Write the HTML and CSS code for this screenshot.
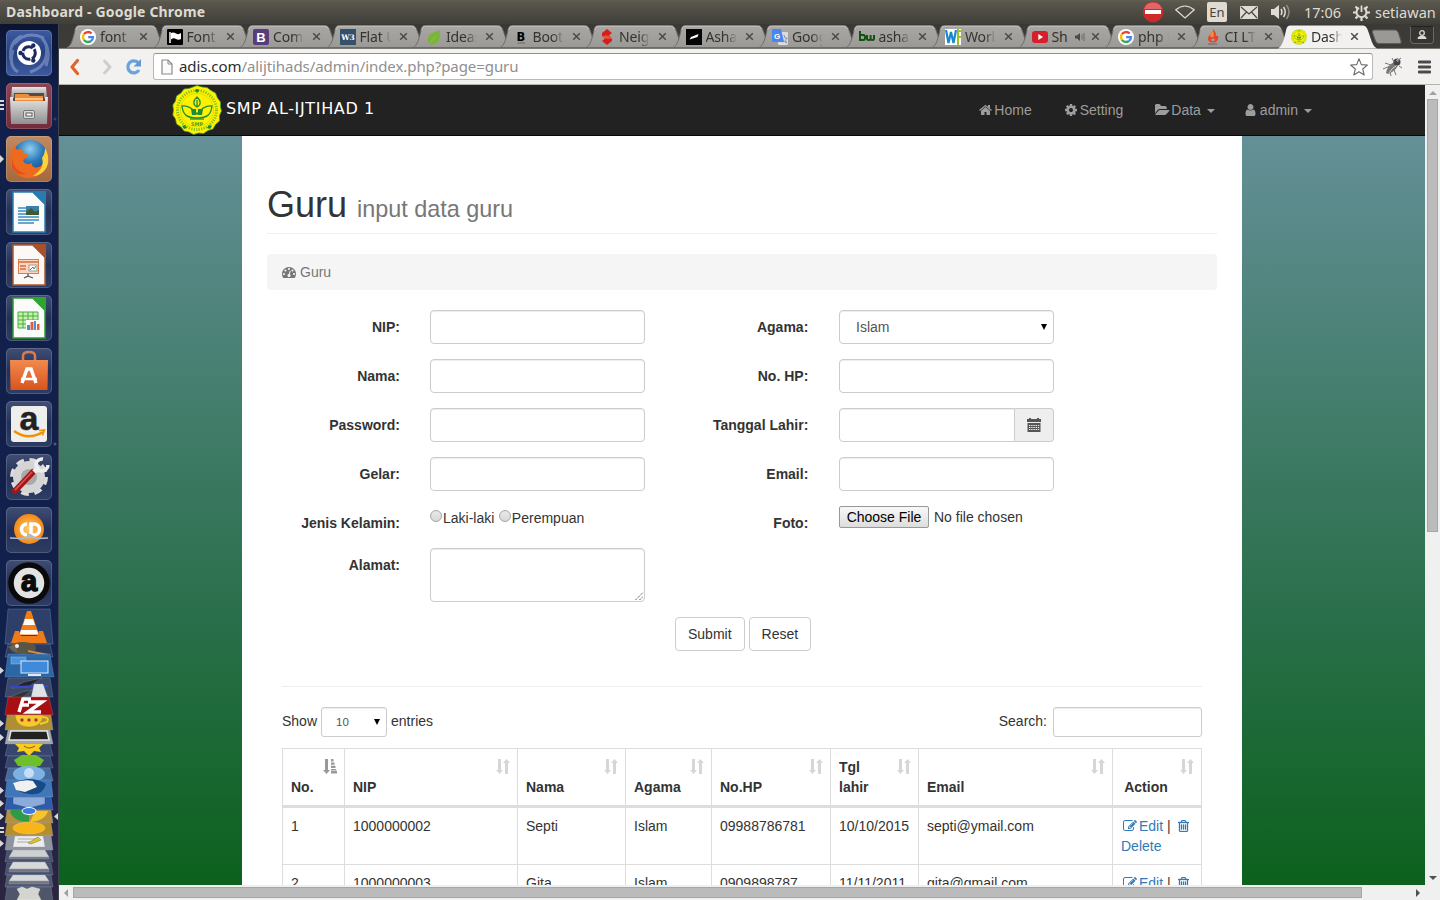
FILE: index.html
```html
<!DOCTYPE html>
<html lang="id">
<head>
<meta charset="utf-8">
<title>Dashboard</title>
<link rel="stylesheet" href="styles.css">
</head>
<body>
<svg class="defs" width="0" height="0" aria-hidden="true">
  <defs>
    <linearGradient id="gTab" x1="0" y1="0" x2="0" y2="1"><stop offset="0" stop-color="#aaa8a5"/><stop offset="1" stop-color="#9b9996"/></linearGradient>
    <linearGradient id="gBlue" x1="0" y1="0" x2="0" y2="1"><stop offset="0" stop-color="#9cc8ee"/><stop offset="1" stop-color="#2a62a8"/></linearGradient>
    <linearGradient id="gGrey" x1="0" y1="0" x2="0" y2="1"><stop offset="0" stop-color="#e6e6e6"/><stop offset="1" stop-color="#8f8f8f"/></linearGradient>
    <linearGradient id="gOrange" x1="0" y1="0" x2="0" y2="1"><stop offset="0" stop-color="#f28a4f"/><stop offset="1" stop-color="#d9541e"/></linearGradient>
    <radialGradient id="gFox" cx=".5" cy=".25" r=".8"><stop offset="0" stop-color="#8fd0f0"/><stop offset=".45" stop-color="#2a78b8"/><stop offset="1" stop-color="#153a78"/></radialGradient>
    <radialGradient id="gCd" cx=".5" cy=".5" r=".6"><stop offset="0" stop-color="#ffd070"/><stop offset="1" stop-color="#f07800"/></radialGradient>
    <symbol id="tab" viewBox="0 0 100 24"><path d="M0 23.500C4 22 5.500 16 7 10.500C8.500 4.500 8.500 1.500 12 1.500H85C88.500 1.500 89.500 4.500 91.500 10.500C93.500 16.500 95 22 99 23.500Z" fill="url(#gTab)" stroke="#6d6b67"/><path d="M8.500 6Q9.500 2.200 12.500 2.200H84.500Q87.500 2.200 88.500 5" fill="none" stroke="#c3c1bd"/></symbol>
    <symbol id="tabOn" viewBox="0 0 100 24"><path d="M0 24C4 22 5.500 16 7 10.500C8.500 4.500 8.500 1 12 1H85C88.500 1 89.500 4.500 91.500 10.500C93.500 16.500 95 22 99 24Z" fill="#f2f1f0"/></symbol>
    <symbol id="x" viewBox="0 0 9 9"><path d="M1.200 1.200L7.800 7.800M7.800 1.200L1.200 7.800" stroke="#4c4a45" stroke-width="1.500"/></symbol>
    <symbol id="google" viewBox="0 0 16 16"><circle cx="8" cy="8" r="8" fill="#fff"/><g fill="none" stroke-width="2.300"><path d="M3.900 5.200A5 5 0 0 1 11.600 4.500" stroke="#ea4335"/><path d="M3.900 5.200A5 5 0 0 0 3.900 10.800" stroke="#fbbc05"/><path d="M3.900 10.800A5 5 0 0 0 11 12" stroke="#34a853"/><path d="M11 12A5 5 0 0 0 13 8.200H8.200" stroke="#4285f4"/></g></symbol>
    <symbol id="logo" viewBox="0 0 50 50">
      <path d="M25 .5L30 2 35 2.500 39 5.500 43.500 8 45.500 13 48.500 17 48.500 22 49.500 26 47.500 30.500 47.500 36 43.500 39.500 41 44 36 45.500 31.500 48.500 26.500 48 21.500 49.500 17 47 12 46 9 42 4.500 39 3.500 34 .8 30 1.500 25 .8 20 3.500 16 4.500 11 9 8 12 4 17 3.500Z" fill="#fff200" stroke="#3f9b2b" stroke-width=".7"/>
      <circle cx="25" cy="25" r="19.500" fill="none" stroke="#8cc21a" stroke-width="3" stroke-dasharray="1.300 1.200"/>
      <circle cx="25" cy="25" r="16.500" fill="none" stroke="#b9d400" stroke-width=".6"/>
      <g fill="none" stroke="#1c8c3c" stroke-width="1.300"><path d="M10 21C16 20 21 24 25 29C29 24 34 20 40 21C39 30 35 33 25 33C15 33 11 30 10 21Z"/><path d="M25 12C20.500 16 21 20 25 22C29 20 29.500 16 25 12ZM25 15V22"/><path d="M18 34H32"/></g>
      <path d="M19 24H24V30H20ZM26 24H31L30 30H26Z" fill="#1c8c3c"/>
      <path d="M24 4L26 4 27 6 25 8 23 6Z M10 41l3-1 2 3-3 1Z M37 40l3 1-2 3-3-1Z" fill="#1c8c3c"/>
      <text x="25" y="41" class="logo-text" text-anchor="middle">SMP</text>
    </symbol>
    <symbol id="home" viewBox="0 0 1664 1792"><path d="M1408 992v480q0 26-19 45t-45 19h-384v-384h-256v384h-384q-26 0-45-19t-19-45v-480q0-1 .5-3t.5-3l575-474 575 474q1 2 1 6zm223-69l-62 74q-8 9-21 11h-3q-13 0-21-7l-692-577-692 577q-12 8-24 7-13-2-21-11l-62-74q-8-10-7-23.500t11-21.500l719-599q32-26 76-26t76 26l244 204v-195q0-14 9-23t23-9h192q14 0 23 9t9 23v408l219 182q10 8 11 21.500t-7 23.500z"/></symbol>
    <symbol id="cog" viewBox="128 0 1536 1792"><path d="M1152 896q0-106-75-181t-181-75-181 75-75 181 75 181 181 75 181-75 75-181zm512-109v222q0 12-8 23t-20 13l-185 28q-19 54-39 91 35 50 107 138 10 12 10 25t-9 23q-27 37-99 108t-94 71q-12 0-26-9l-138-108q-44 23-91 38-16 136-29 186-7 28-36 28h-222q-14 0-24.500-8.500t-11.500-21.500l-28-184q-49-16-90-37l-141 107q-10 9-25 9-14 0-25-11-126-114-165-168-7-10-7-23 0-12 8-23 15-21 51-66.500t54-70.500q-27-50-41-99l-183-27q-13-2-21-12.500t-8-23.500v-222q0-12 8-23t19-13l186-28q14-46 39-92-40-57-107-138-10-12-10-24 0-10 9-23 26-36 98.500-107.500t94.500-71.500q13 0 26 10l138 107q44-23 91-38 16-136 29-186 7-28 36-28h222q14 0 24.500 8.500t11.500 21.500l28 184q49 16 90 37l142-107q9-9 24-9 13 0 25 10 129 119 165 170 7 8 7 22 0 12-8 23-15 21-51 66.500t-54 70.500q26 50 41 98l183 28q13 2 21 12.500t8 23.500z"/></symbol>
    <symbol id="folder" viewBox="0 0 1856 1792"><path d="M1815 952q0 31-31 66l-336 396q-43 51-120.500 86.500t-143.500 35.500h-1088q-34 0-60.500-13t-26.500-43q0-31 31-66l336-396q43-51 120.500-86.500t143.500-35.500h1088q34 0 60.500 13t26.500 43zm-343-344v160h-832q-94 0-197 47.500t-164 119.500l-337 396-5 6q0-4-.5-12.500t-.5-12.500v-960q0-92 66-158t158-66h320q92 0 158 66t66 158v32h544q92 0 158 66t66 158z"/></symbol>
    <symbol id="user" viewBox="256 0 1280 1792"><path d="M1536 1399q0 109-62.500 187t-150.500 78h-854q-88 0-150.500-78t-62.500-187q0-85 8.500-160.500t31.500-152 58.500-131 94-89 134.500-34.500q131 128 313 128t313-128q76 0 134.500 34.500t94 89 58.500 131 31.500 152 8.500 160.500zm-256-887q0 159-112.500 271.500t-271.500 112.500-271.500-112.500-112.500-271.500 112.500-271.500 271.500-112.500 271.500 112.500 112.500 271.500z"/></symbol>
    <symbol id="gauge" viewBox="0 0 1792 1792"><path d="M384 1152q0-53-37.500-90.500t-90.500-37.500-90.500 37.500-37.500 90.500 37.500 90.500 90.500 37.500 90.500-37.500 37.500-90.500zm192-448q0-53-37.500-90.500t-90.500-37.500-90.500 37.500-37.500 90.500 37.500 90.500 90.500 37.500 90.500-37.500 37.500-90.500zm428 481l101-382q6-26-7.500-48.500t-38.500-29.500-48 6.500-30 39.500l-101 382q-60 5-107 43.500t-63 98.500q-20 77 20 146t117 89 146-20 89-117q16-60-6-117t-72-91zm660-33q0-53-37.500-90.500t-90.500-37.500-90.500 37.500-37.500 90.500 37.500 90.500 90.500 37.500 90.500-37.500 37.500-90.500zm-640-640q0-53-37.500-90.500t-90.500-37.500-90.500 37.500-37.500 90.500 37.500 90.500 90.500 37.500 90.500-37.500 37.500-90.500zm448 192q0-53-37.500-90.500t-90.500-37.500-90.500 37.500-37.500 90.500 37.500 90.500 90.500 37.500 90.500-37.500 37.500-90.500zm320 448q0 261-141 483-19 29-54 29h-1402q-35 0-54-29-141-221-141-483 0-182 71-348t191-286 286-191 348-71 348 71 286 191 191 286 71 348z"/></symbol>
    <symbol id="edit" viewBox="0 0 1792 1792"><path d="M888 1184l116-116-152-152-116 116v56h96v96h56zm440-720q-16-16-33 1l-350 350q-17 17-1 33t33-1l350-350q17-17 1-33zm80 594v190q0 119-84.500 203.500t-203.500 84.500h-832q-119 0-203.500-84.500t-84.500-203.500v-832q0-119 84.500-203.500t203.500-84.500h832q63 0 117 25 15 7 18 23 3 17-9 29l-49 49q-14 14-32 8-23-6-45-6h-832q-66 0-113 47t-47 113v832q0 66 47 113t113 47h832q66 0 113-47t47-113v-126q0-13 9-22l64-64q15-15 35-7t20 29zm-96-738l288 288-672 672h-288v-288zm444 132l-92 92-288-288 92-92q28-28 68-28t68 28l152 152q28 28 28 68t-28 68z"/></symbol>
    <symbol id="trash" viewBox="192 128 1408 1536"><path d="M704 736v576q0 14-9 23t-23 9h-64q-14 0-23-9t-9-23v-576q0-14 9-23t23-9h64q14 0 23 9t9 23zm256 0v576q0 14-9 23t-23 9h-64q-14 0-23-9t-9-23v-576q0-14 9-23t23-9h64q14 0 23 9t9 23zm256 0v576q0 14-9 23t-23 9h-64q-14 0-23-9t-9-23v-576q0-14 9-23t23-9h64q14 0 23 9t9 23zm128 724v-948h-896v948q0 22 7 40.500t14.500 27 10.500 8.500h832q3 0 10.500-8.500t14.500-27 7-40.500zm-672-1076h448l-48-117q-7-9-17-11h-317q-10 2-17 11zm928 32v64q0 14-9 23t-23 9h-96v948q0 83-47 143.500t-113 60.500h-832q-66 0-113-58.500t-47-141.500v-952h-96q-14 0-23-9t-9-23v-64q0-14 9-23t23-9h309l70-167q15-37 54-63t79-26h320q40 0 79 26t54 63l70 167h309q14 0 23 9t9 23z"/></symbol>
    <symbol id="sort" viewBox="0 0 14 15"><path d="M2 0h3v11h2l-3.500 4L0 11h2zM9 15h3V4h2l-3.500-4L7 4h2z"/></symbol>
    <symbol id="sortAsc" viewBox="0 0 14 15"><path d="M2 0h3v11h2l-3.500 4L0 11h2zM8 0h2.500v2.500H8zM8 3.500h3.500v2.300H8zM8 6.800h4.500v2.200H8zM8 10h5.300v1.500H8zM8 12h6v2.500H8z"/></symbol>
    <symbol id="ring" viewBox="0 0 46 46"><rect x=".5" y=".5" width="45" height="45" rx="4.500" fill="none" stroke="#fff" stroke-opacity=".16"/></symbol>
  </defs>
</svg>

<div class="panel">
  <div class="panel-title">Dashboard - Google Chrome</div>
  <div class="tray">
    <svg width="22" height="22" viewBox="0 0 22 22"><circle cx="11" cy="11" r="10.300" fill="#cf2a2a"/><path d="M2 8a9.500 9.500 0 0 1 18 0Z" fill="#ea8080" opacity=".7"/><rect x="3" y="9" width="16" height="4" fill="#fff"/></svg>
    <svg class="wifi" width="20" height="14" viewBox="0 0 20 14"><path d="M.8 4.800Q10-2.800 19.200 4.800L10 13Z" fill="none" stroke="#dfdbd2" stroke-width="1.200"/></svg>
    <span class="lang">En</span>
    <svg class="mail" width="18" height="13" viewBox="0 0 18 13"><rect width="18" height="13" rx="1" fill="#dfdbd2"/><path d="M1 1L9 8 17 1M1 12L6.500 6M17 12L11.500 6" fill="none" stroke="#4a4942" stroke-width="1.200"/></svg>
    <svg class="vol" width="20" height="16" viewBox="0 0 20 16"><path d="M0 5H3L8 1V15L3 11H0Z" fill="#dfdbd2"/><path d="M10 5q2 3 0 6M12.500 3q3.500 5 0 10" fill="none" stroke="#dfdbd2" stroke-width="1.500"/><path d="M15.500 1q5 7 0 14" fill="none" stroke="#8f8c84" stroke-width="1.500"/></svg>
    <span class="clock">17:06</span>
    <svg class="power" width="17" height="17" viewBox="0 0 17 17"><g fill="none" stroke="#dfdbd2"><path d="M6 3.800A5 5 0 1 0 11 3.800" stroke-width="2"/><path d="M8.500 1.500V8" stroke-width="1.800"/><path d="M0 8.500H3M14 8.500H17M2.500 14.500L4.600 12.400M14.500 14.500L12.400 12.400M8.500 14V17M2.500 2.500L4.600 4.600M14.500 2.500L12.400 4.600" stroke-width="2.200"/></g></svg>
    <span class="who">setiawan</span>
  </div>
</div>

<div class="desktop">
  <aside class="launcher">
    <div class="app app-dash"><svg viewBox="0 0 46 46"><g fill="none" stroke="#b9c9ee" stroke-opacity=".4" stroke-width="3"><path d="M8 14Q20 0 38 8M5 30Q2 12 16 6M40 36Q46 20 36 8M12 42Q2 36 7 20M40 14Q44 36 24 42"/></g><circle cx="23" cy="23" r="12" fill="#fff"/><circle cx="23" cy="23" r="6.300" fill="none" stroke="#1d2a5c" stroke-width="3" stroke-dasharray="11.600 1.600" stroke-dashoffset="5"/><g fill="#1d2a5c"><circle cx="14.500" cy="23" r="2.200"/><circle cx="27.300" cy="15.500" r="2.200"/><circle cx="27.300" cy="30.500" r="2.200"/></g><use href="#ring"/></svg></div>
    <div class="app app-files"><svg viewBox="0 0 46 46"><path d="M6 4H40L41 15H5Z" fill="url(#gGrey)"/><path d="M8 10H38V20H8Z" fill="#5a4a40"/><path d="M9 11H22L24 13H37V19H9Z" fill="#f08a35"/><path d="M9 16H37" stroke="#f9d9b0" stroke-width="1.500"/><path d="M4 14H7V18H39V14H42L41 41H5Z" fill="url(#gGrey)"/><rect x="17.500" y="27.500" width="11" height="8" rx="1.500" fill="#ddd" stroke="#777"/><rect x="20" y="30" width="6" height="3" fill="#fff" stroke="#555"/><use href="#ring"/></svg><i class="bars"></i></div>
    <div class="app app-fox"><svg viewBox="0 0 46 46"><circle cx="24" cy="22" r="18" fill="url(#gFox)"/><path d="M39 12C44 20 43 30 38 35C32 42 22 44 14 40C5 35 2 26 5 16L8 9L11 14L16 12C16 16 19 18 23 19L17 24C18 28 22 29 26 27C25 32 32 33 36 29C40 25 40 18 39 12Z" fill="#ee6a1e"/><path d="M39 12C44 20 43 30 38 35C35 38 31 40 27 40C36 34 38 28 36 22Q39 18 39 12Z" fill="#ffd23a"/><path d="M6 20Q6 34 20 38Q10 40 6 31Z" fill="#d8401c" opacity=".6"/><use href="#ring"/></svg><i class="arrow"></i></div>
    <div class="app"><svg viewBox="0 0 46 46"><path d="M7 3H27L39 15V43H7Z" fill="#fbfbfb" stroke="#2e7fb0" stroke-width="1.500"/><path d="M25 2H40V17Z" fill="#2a7cae"/><g stroke="#3a8cc4" stroke-width="1.500"><path d="M12 19H20M12 22H20M12 25H20M12 28H33M12 31H33M12 34H28"/></g><rect x="20" y="17" width="13" height="9" fill="#3b7fae"/><path d="M20 26V23L25 19L29 23L33 21V26Z" fill="#3f5b2e"/><use href="#ring"/></svg></div>
    <div class="app"><svg viewBox="0 0 46 46"><path d="M7 3H27L39 15V43H7Z" fill="#fbf8f6" stroke="#b05a2a" stroke-width="1.500"/><path d="M25 2H40V17Z" fill="#a8502a"/><rect x="12.500" y="17.500" width="20" height="14" fill="#fbd8c2" stroke="#e07a48"/><path d="M13 20H32M14 24H20M14 27H20" stroke="#d86a3c" stroke-width="1.500"/><rect x="23" y="23" width="8" height="6" fill="#fff" stroke="#9a9a9a"/><path d="M24 28L27 25L28 27L30 24" stroke="#3a9a30" fill="none"/><path d="M22 32V34L18 36M22 34L27 36" stroke="#555" fill="none" stroke-width="1.300"/><use href="#ring"/></svg></div>
    <div class="app"><svg viewBox="0 0 46 46"><path d="M7 3H27L39 15V43H7Z" fill="#fbfcfa" stroke="#2f9a2a" stroke-width="1.500"/><path d="M25 2H40V17Z" fill="#2ea52e"/><path d="M12 17H32V33H12Z" fill="#c9f0b0" stroke="#48b040"/><path d="M12 21H32M12 25H32M12 29H32M17 17V33M22 17V33M27 17V33" stroke="#48b040"/><path d="M20 25H34V35H20Z" fill="#fff"/><path d="M21 30h3v5h-3zM28 26h2v9h-2z" fill="#4a90d9"/><path d="M24.500 27h3v8h-3zM31 29h2.500v6H31z" fill="#e2603a"/><use href="#ring"/></svg></div>
    <div class="app"><svg viewBox="0 0 46 46"><path d="M17 13V8Q17 4 23 4T29 8V13" fill="none" stroke="#d97a50" stroke-width="2.500"/><path d="M4 12H42L41.500 42H4.500Z" fill="url(#gOrange)"/><path d="M16 35L21 21H25L30 35" fill="none" stroke="#fff" stroke-width="3.500"/><path d="M15 31H31" stroke="#fff" stroke-width="2.500"/><use href="#ring"/></svg></div>
    <div class="app"><svg viewBox="0 0 46 46"><rect x="5" y="5" width="36" height="36" rx="3" fill="#eeeeec"/><text x="23" y="29" class="amz" text-anchor="middle">a</text><path d="M8 30Q22 40 37 31" fill="none" stroke="#f29100" stroke-width="2.500"/><path d="M33 29.500L38.500 29L36.500 34.500" fill="none" stroke="#f29100" stroke-width="1.600"/><use href="#ring"/></svg></div>
    <div class="app"><svg viewBox="0 0 46 46"><circle cx="23" cy="23" r="16.500" fill="none" stroke="#dcdcdc" stroke-width="5" stroke-dasharray="7.500 5.460"/><circle cx="23" cy="23" r="11.500" fill="none" stroke="#d5d5d5" stroke-width="9"/><circle cx="23" cy="23" r="8" fill="#aaa"/><path d="M9 37L27 18" stroke="#a01818" stroke-width="6" stroke-linecap="round"/><path d="M9 36L26 18" stroke="#e05050" stroke-width="1.800"/><path d="M28 18L33 13" stroke="#eee" stroke-width="5"/><path d="M37 5A6 6 0 1 0 42 11" fill="none" stroke="#eee" stroke-width="3.500"/><use href="#ring"/></svg></div>
    <div class="app"><svg viewBox="0 0 46 46"><circle cx="23" cy="22" r="15" fill="url(#gCd)"/><path d="M21 17A5.500 5.500 0 1 0 21 28M25 17V28H28A5.500 5.500 0 0 0 28 17Z" fill="none" stroke="#fff" stroke-width="3.500"/><path d="M4 31H42L31 32L24 27L17 32Z" fill="#aebccb" stroke="#aebccb"/><use href="#ring"/></svg></div>
    <div class="app"><svg viewBox="0 0 46 46"><circle cx="23" cy="23" r="18" fill="#e3e3e3" stroke="#0a0a0a" stroke-width="5.500"/><text x="23" y="31" class="azr" text-anchor="middle">a</text><use href="#ring"/></svg></div>
    <svg class="stack" width="59" height="292" viewBox="0 8 59 292">
      <g stroke="#8fa3c8" stroke-opacity=".3">
        <path d="M8 9H50L53 44H5Z" fill="#3c4e78" fill-opacity=".7"/>
        <path d="M27 11H31L39 35H19Z" fill="#f57c14" stroke="none"/><path d="M25 19H33L35 25H23ZM21 30H37L38.500 34.500H19.500Z" fill="#fff" stroke="none"/><path d="M15 31H19L21 36H37L39 31H43L47 43H11Z" fill="#f07a18" stroke="none"/>
        <path d="M8 44H50L53 57H5Z" fill="#394866" fill-opacity=".7"/><ellipse cx="23" cy="48" rx="13" ry="6" fill="#5b5548" stroke="none"/><path d="M8 47L17 43V53Z" fill="#6b6454" stroke="none"/><circle cx="17" cy="46" r="2" fill="#eee" stroke="none"/><path d="M28 51L48 55" stroke="#d88a3a" stroke-opacity="1" stroke-width="2"/>
        <path d="M8 54H50L54 77H5Z" fill="#2f6faf" fill-opacity=".9"/><rect x="11" y="57" width="15" height="7" fill="#4a94dc" stroke="#cfe2f5"/><rect x="21" y="61" width="27" height="12" fill="#3f8adb" stroke="#dfe9f4" stroke-opacity="1"/><path d="M28 75H41" stroke="#e8e8e8" stroke-opacity="1" stroke-width="2"/>
        <path d="M8 78H50L53 97H5Z" fill="#45526f" fill-opacity=".8"/><path d="M12 88L24 82L42 78L28 87Z" fill="#22252c"/><path d="M10 87L48 86" stroke="#3a48c8" stroke-opacity="1" stroke-width="2"/><path d="M34 84H43L48 98H31Z" fill="#dfe3e8"/><path d="M8 98L22 92L32 90L22 98Z" fill="#333"/>
        <path d="M8 97H49L53 115H5Z" fill="#a80f12" stroke="#e07070"/><path d="M19 112L23 99H31M20 105H29M28 102H42L28 112H41" fill="none" stroke="#fff" stroke-opacity="1" stroke-width="3.500"/>
        <path d="M7 115H51L53 130H5Z" fill="#b08e36"/><path d="M15 115H43Q42 127 29 127T15 115Z" fill="#f3cb2a" stroke="#8a6a10"/><path d="M42 117Q50 117 47 122L40 124" fill="none" stroke="#f3cb2a" stroke-opacity="1" stroke-width="2"/><circle cx="22" cy="120" r="1.700" fill="#c21"/><circle cx="29" cy="120" r="1.700" fill="#c21"/><circle cx="36" cy="120" r="1.700" fill="#c21"/>
        <path d="M8 130H50L53 144H5Z" fill="#a6a6a6"/><path d="M11 131H47L49 140H9Z" fill="#222" stroke="#e4e4e4" stroke-opacity="1" stroke-width="1.500"/>
        <path d="M8 144H50L53 156H5Z" fill="#36466c"/><path d="M15 144H43L39 148L41 152L34 151L29 156L24 151L17 152L19 148Z" fill="#f6cf1c" stroke="none"/><path d="M24 146Q29 150 35 146" fill="none" stroke="#c33" stroke-opacity="1"/>
        <path d="M8 156H50L53 168H5Z" fill="#36466c"/><path d="M14 160L22 155H36L44 160L40 166H37V170H21V166H18Z" fill="#6fbf2a" stroke="none"/>
        <path d="M8 168H50L53 181H5Z" fill="#456b9c"/><ellipse cx="29" cy="174" rx="16" ry="8" fill="#7fb0e2" stroke="none"/><circle cx="29" cy="173" r="5" fill="#c5ddf5" stroke="none"/>
        <path d="M7 180H51L53 197H5Z" fill="#4077b8"/><path d="M13 184Q30 174 46 184Q43 196 29 194T13 184Z" fill="#174a86" stroke="none"/><path d="M13 183Q24 179 33 181L37 187L25 192L16 190Z" fill="#f0f0f0" stroke="none"/>
        <path d="M7 197H51L53 210H5Z" fill="#2d5da8"/><path d="M13 197H45V204L29 208L13 204Z" fill="#8cabdb" stroke="#17366f"/>
        <path d="M7 210H51L53 223H5Z" fill="#b6903c"/><path d="M10 212Q14 222 29 222V213L22 210H11Z" fill="#2f9a4a" stroke="none"/><path d="M30 222Q45 221 48 211H35Z" fill="#f5c52a" stroke="none"/><ellipse cx="29" cy="211" rx="7" ry="3.500" fill="#3b7de0" stroke="#fff" stroke-opacity="1"/>
        <path d="M7 223H51L53 236H5Z" fill="#b68d2c"/><ellipse cx="29" cy="228" rx="16" ry="6" fill="#f7b51c" stroke="#fbe08a"/>
        <path d="M7 235H51L53 250H5Z" fill="#90949c"/><path d="M15 236H43L45 247H13Z" fill="#ececec"/><path d="M18 239H36M17 242H30" stroke="#aaa" stroke-opacity="1"/><path d="M28 243L38 237L41 240L31 244Z" fill="#e0c12a" stroke="#333"/>
        <path d="M7 250H51L53 262H5Z" fill="#48506a"/><path d="M13 250H45L49 257H9Z" fill="#cfcfcf"/><path d="M9 257H49V259H9Z" fill="#777"/>
        <path d="M7 263H51L53 275H5Z" fill="#48506a"/><path d="M13 262H45L49 269H9Z" fill="#d8d8d8"/><path d="M9 269H49V272H9Z" fill="#777"/>
        <path d="M7 275H51L53 287H5Z" fill="#50566a"/><path d="M13 275H45L49 281H9Z" fill="#d8d8d8"/><path d="M9 281H49V284H9Z" fill="#777"/>
        <path d="M7 287H51L53 301H5Z" fill="#50566a"/><path d="M17 289L22 287L27 289L32 287L40 289L38 294L41 300H17L20 294Z" fill="#d5d5d0" stroke="#fff"/>
      </g>
      <g fill="#d8d8d8"><path d="M0 67L4 70.500L0 74ZM0 120L4 123.500L0 127ZM0 134L4 137.500L0 141ZM0 187L4 190.500L0 194ZM0 200L4 203.500L0 207ZM0 213L4 216.500L0 220ZM0 227H4V229H0ZM0 231H4V233H0ZM0 240L4 243.500L0 247ZM58 213L54 216.500L58 220Z"/></g>
    </svg>
  </aside>

  <main class="browser">
    <div class="tabs">
      <div class="tab"><svg class="shape"><use href="#tab"/></svg><svg class="fav"><use href="#google"/></svg><span>font</span><svg class="close"><use href="#x"/></svg></div>
      <div class="tab"><svg class="shape"><use href="#tab"/></svg><svg class="fav" viewBox="0 0 16 16"><rect width="16" height="16" rx="1" fill="#000"/><path d="M3 3V14" stroke="#fff" stroke-width="1.500"/><path d="M4 4Q6.500 3 9 4.500T14 4V10Q11.500 11.500 9 10T4 10.500Z" fill="#fff"/></svg><span>Font</span><svg class="close"><use href="#x"/></svg></div>
      <div class="tab"><svg class="shape"><use href="#tab"/></svg><svg class="fav" viewBox="0 0 16 16"><rect width="16" height="16" rx="2" fill="#563d7c"/><text x="8" y="12.500" class="fv-b" text-anchor="middle">B</text></svg><span>Com</span><svg class="close"><use href="#x"/></svg></div>
      <div class="tab"><svg class="shape"><use href="#tab"/></svg><svg class="fav" viewBox="0 0 16 16"><rect width="16" height="16" fill="#35506b"/><text x="8" y="11" class="fv-w3" text-anchor="middle">W3</text></svg><span>Flat U</span><svg class="close"><use href="#x"/></svg></div>
      <div class="tab"><svg class="shape"><use href="#tab"/></svg><svg class="fav" viewBox="0 0 16 16"><path d="M13.500 1C15 7 14 13 8.500 15.500C3.500 16.500 .5 12 2 8.500L3 6.500C7 2 9 4 13.500 1Z" fill="#7ab53a"/><path d="M4 14Q7 10 10 7" stroke="#8cc44c" fill="none"/></svg><span>Ideas</span><svg class="close"><use href="#x"/></svg></div>
      <div class="tab"><svg class="shape"><use href="#tab"/></svg><svg class="fav" viewBox="0 0 16 16"><text x="8" y="12" class="fv-bs" text-anchor="middle">B</text><path d="M4.500 14H12" stroke="#666"/></svg><span>Boot</span><svg class="close"><use href="#x"/></svg></div>
      <div class="tab"><svg class="shape"><use href="#tab"/></svg><svg class="fav" viewBox="0 0 16 16"><path d="M3 4L8 0L13 4L10 6.500L13 10V12L8 16L3 12L6 9.500L3 7Z" fill="#d91e18"/><path d="M3 7L6 9.500L13 10L9 6.500Z" fill="#f0503c"/></svg><span>Neig</span><svg class="close"><use href="#x"/></svg></div>
      <div class="tab"><svg class="shape"><use href="#tab"/></svg><svg class="fav" viewBox="0 0 16 16"><rect width="16" height="16" fill="#050505"/><path d="M3.500 10.500L5 8L12.500 5L11.500 8Z" fill="#fff"/></svg><span>Asha</span><svg class="close"><use href="#x"/></svg></div>
      <div class="tab"><svg class="shape"><use href="#tab"/></svg><svg class="fav" viewBox="0 0 16 16"><rect x="6" y="3" width="10" height="13" rx="1" fill="#dcdcdc"/><path d="M12 6L13 9H15.500L13.500 11L14.500 14L12 12L10 13" fill="none" stroke="#7a98b8"/><path d="M1 0H9L12 13H1Q0 13 0 12V1Q0 0 1 0Z" fill="#4a86f0"/><text x="5" y="9.500" class="fv-g" text-anchor="middle">G</text></svg><span>Goog</span><svg class="close"><use href="#x"/></svg></div>
      <div class="tab"><svg class="shape"><use href="#tab"/></svg><svg class="fav" viewBox="0 0 16 16"><path d="M1 2V11H4.500Q6 11 6 8.500T4.500 6H1M8 6V9.500Q8 11 9.800 11T11.600 9.500V6M11.600 9.500Q11.600 11 13.300 11T15 9.500V6" fill="none" stroke="#13520f" stroke-width="2"/></svg><span>asha</span><svg class="close"><use href="#x"/></svg></div>
      <div class="tab"><svg class="shape"><use href="#tab"/></svg><svg class="fav" viewBox="0 0 16 16"><rect width="16" height="16" fill="#fff"/><path d="M1 1L3.500 14L6 3L8.500 14L11 1" fill="none" stroke="#1a86cc" stroke-width="2.200"/><path d="M13 0V16M13 2H16M13 8H16" stroke="#9cc31c" stroke-width="2"/></svg><span>Worl</span><svg class="close"><use href="#x"/></svg></div>
      <div class="tab tab-audio"><svg class="shape"><use href="#tab"/></svg><svg class="fav" viewBox="0 0 16 16"><rect y="2" width="16" height="12" rx="3" fill="#d5202c"/><path d="M6.300 5V11L11 8Z" fill="#fff"/></svg><span>Sh</span><svg class="speaker" viewBox="0 0 10 10"><path d="M0 3.500H2L5 1V9L2 6.500H0Z" fill="#4c4a45"/><path d="M7 2.500V7.500M9 1V9" stroke="#6b6965"/></svg><svg class="close"><use href="#x"/></svg></div>
      <div class="tab"><svg class="shape"><use href="#tab"/></svg><svg class="fav"><use href="#google"/></svg><span>php t</span><svg class="close"><use href="#x"/></svg></div>
      <div class="tab"><svg class="shape"><use href="#tab"/></svg><svg class="fav" viewBox="0 0 16 16"><path d="M8 0Q12 4 10.500 7Q14 6 13 10Q12 13.500 8 13.500Q3 13.500 3 9.500Q3 7 5.500 5Q5.500 7 7 7Q9 4 8 0Z" fill="#e8432a"/><path d="M7 1Q10 4 8.500 8Q6 9 5 7Q6 4 7 1Z" fill="#f08a3a"/><path d="M6 11Q8 7.500 10 11Q8 13.500 6 11Z" fill="#a09e9a"/><path d="M3 15H12" stroke="#666"/></svg><span>CI LTE</span><svg class="close"><use href="#x"/></svg></div>
      <div class="tab tab-on"><svg class="shape"><use href="#tabOn"/></svg><svg class="fav"><use href="#logo"/></svg><span>Dash</span><svg class="close"><use href="#x"/></svg></div>
      <svg class="newtab" width="32" height="16" viewBox="0 0 32 16"><path d="M3 1H24Q26.500 1 27.500 4L30 12Q31 14.500 28 14.500H8Q5.500 14.500 4.500 12L1.500 3.500Q1 1 3 1Z" fill="#9b9996" stroke="#5e5c57"/></svg>
      <div class="profile"><svg width="10" height="10" viewBox="0 0 10 10"><circle cx="5" cy="3" r="2.300" fill="none" stroke="#dcdad5" stroke-width="1.300"/><path d="M.7 9V7.500Q1.500 5.700 5 5.700T9.300 7.500V9Z" fill="#dcdad5"/></svg></div>
    </div>
    <div class="toolbar">
      <svg class="back" width="12" height="18" viewBox="0 0 12 18"><path d="M8.500 2.500L3 9L8.500 15.500" fill="none" stroke="#e0632c" stroke-width="3.200" stroke-linecap="round" stroke-linejoin="round"/></svg>
      <svg class="fwd" width="12" height="18" viewBox="0 0 12 18"><path d="M3.500 3L9 9L3.500 15" fill="none" stroke="#d0cdca" stroke-width="3" stroke-linecap="round" stroke-linejoin="round"/></svg>
      <svg class="reload" width="17" height="18" viewBox="0 0 17 18"><path d="M13.500 5A6 6 0 1 0 14 12" fill="none" stroke="#6aa3dc" stroke-width="3.300"/><path d="M16 1V8.500H8.500Z" fill="#5f9bd6"/></svg>
      <div class="omnibox">
        <svg width="12" height="16" viewBox="0 0 12 16"><path d="M1 1H7L11 5V15H1Z" fill="#fafafa" stroke="#8a8a8a" stroke-width="1.200"/><path d="M7 1V5H11" fill="none" stroke="#8a8a8a"/></svg>
        <div class="url"><b>adis.com</b>/alijtihads/admin/index.php?page=guru</div>
        <svg class="star" width="18" height="18" viewBox="0 0 18 18"><path d="M9 .8L11.300 6.600L17.400 7L12.700 11L14.200 17L9 13.700L3.800 17L5.300 11L.6 7L6.700 6.600Z" fill="#fff" stroke="#6b6b6b" stroke-width="1.100" stroke-linejoin="round"/></svg>
      </div>
      <svg class="bug" width="20" height="20" viewBox="0 0 20 20"><path d="M4 16Q5 9 12 5L16 8Q14 14 6 17Z" fill="#777"/><path d="M7 16Q10 11 15 8" stroke="#ddd" fill="none"/><circle cx="15" cy="5" r="3.500" fill="#444"/><path d="M14 3L17 2L16 5" fill="#eee"/><path d="M1 12L8 9M3 6L9 8M10 1L12 5M17 9L20 11M12 13L14 18M8 15L9 19M15 4L19 1" stroke="#777" fill="none"/></svg>
      <svg class="menu" width="13" height="14" viewBox="0 0 13 14"><path d="M1 2H12M1 7H12M1 12H12" stroke="#4a4a4a" stroke-width="2.800" stroke-linecap="round"/></svg>
    </div>

    <div class="view">
      <div class="page">
        <nav class="navbar">
          <div class="brand"><svg width="50" height="50"><use href="#logo"/></svg><span>SMP AL-IJTIHAD 1</span></div>
          <ul class="nav">
            <li class="n-home"><svg width="13" height="14"><use href="#home"/></svg><a>Home</a></li>
            <li class="n-set"><svg width="12" height="14"><use href="#cog"/></svg><a>Setting</a></li>
            <li class="n-data"><svg width="15" height="14"><use href="#folder"/></svg><a>Data</a><i class="caret"></i></li>
            <li class="n-admin"><svg width="11" height="14"><use href="#user"/></svg><a>admin</a><i class="caret"></i></li>
          </ul>
        </nav>
        <div class="sheet">
          <h1>Guru <small>input data guru</small></h1>
          <div class="crumb"><svg width="14" height="14"><use href="#gauge"/></svg>Guru</div>
          <form class="form">
            <label>NIP:</label><input class="field" type="text"><label class="r">Agama:</label>
            <div class="select"><span>Islam</span><i></i></div>
            <label>Nama:</label><input class="field" type="text"><label class="r">No. HP:</label><input class="field" type="text">
            <label>Password:</label><input class="field" type="password"><label class="r">Tanggal Lahir:</label>
            <div class="group"><input class="field" type="text"><span class="addon"><svg width="14" height="14" viewBox="0 0 14 14"><path d="M0 1H2V0H4V1H10V0H12V1H14V4H0ZM.5 5H13.500V14H.5Z" fill="#555"/><path d="M2 7.500H12.500M2 9.500H12.500M2 11.500H12.500" stroke="#eee" stroke-dasharray="1.400 .8"/></svg></span></div>
            <label>Gelar:</label><input class="field" type="text"><label class="r">Email:</label><input class="field" type="text">
            <label>Jenis Kelamin:</label><div class="radios"><input type="radio" name="jk"><span>Laki-laki</span><input type="radio" name="jk"><span>Perempuan</span></div>
            <label class="r">Foto:</label><div class="file"><span class="file-btn">Choose File</span>No file chosen</div>
            <label>Alamat:</label><div class="area"><svg width="10" height="10" viewBox="0 0 10 10"><path d="M1.500 9L9 1.500M5.500 9L9 5.500" stroke="#555" stroke-dasharray="1.400 .8"/></svg></div>
            <div class="actions"><button type="button">Submit</button><button type="button">Reset</button></div>
          </form>
          <section class="list">
            <div class="list-bar">
              <div class="len">Show <div class="select select-sm"><span>10</span><i></i></div> entries</div>
              <div class="find">Search:<input class="field field-sm" type="text"></div>
            </div>
            <table>
              <colgroup><col class="c1"><col class="c2"><col class="c3"><col class="c4"><col class="c5"><col class="c6"><col class="c7"><col class="c8"></colgroup>
              <thead><tr>
                <th>No.<svg class="asc"><use href="#sortAsc"/></svg></th><th>NIP<svg><use href="#sort"/></svg></th><th>Nama<svg><use href="#sort"/></svg></th><th>Agama<svg><use href="#sort"/></svg></th><th>No.HP<svg><use href="#sort"/></svg></th><th>Tgl lahir<svg><use href="#sort"/></svg></th><th>Email<svg><use href="#sort"/></svg></th><th class="mid">Action<svg><use href="#sort"/></svg></th>
              </tr></thead>
              <tbody>
                <tr><td>1</td><td>1000000002</td><td>Septi</td><td>Islam</td><td>09988786781</td><td>10/10/2015</td><td>septi@ymail.com</td><td><a><svg class="i-edit"><use href="#edit"/></svg>Edit</a> | <a><svg class="i-trash"><use href="#trash"/></svg> Delete</a></td></tr>
                <tr><td>2</td><td>1000000003</td><td>Gita</td><td>Islam</td><td>0909898787</td><td>11/11/2011</td><td>gita@gmail.com</td><td><a><svg class="i-edit"><use href="#edit"/></svg>Edit</a> | <a><svg class="i-trash"><use href="#trash"/></svg> Delete</a></td></tr>
              </tbody>
            </table>
          </section>
        </div>
      </div>
      <div class="vbar"><i class="up"></i><div class="vthumb"></div><i class="down"></i></div>
      <div class="hbar"><i class="left"></i><div class="hthumb"></div><i class="right"></i></div>
      <div class="corner"></div>
    </div>
  </main>
</div>
</body>
</html>
```
FILE: styles.css
```css
* { box-sizing: border-box; }
body { margin: 0; width: 1440px; height: 900px; overflow: hidden; display: flex; flex-direction: column; font-family: "Liberation Sans", Arial, sans-serif; background: #3c3b37; }
.defs { position: absolute; }
svg { display: block; flex: none; }

/* desktop panel */
.panel { height: 24px; flex: none; display: flex; justify-content: space-between; align-items: center; padding: 0 6px; background: linear-gradient(#615e51 0, #59574d 2px, #3f3e39); color: #dfdbd2; font-family: "Noto Sans", "Open Sans", sans-serif; }
.panel-title { font-weight: 700; font-size: 14px; line-height: 24px; letter-spacing: .18px; white-space: nowrap; }
.tray { display: flex; align-items: center; font-size: 14.500px; line-height: 24px; }
.wifi { margin-left: 11px; }
.lang { margin-left: 12px; width: 20px; height: 20px; border-radius: 2px; background: #dfdbd2; color: #45443e; font-size: 13px; line-height: 21px; text-align: center; }
.mail { margin-left: 13px; }
.vol { margin-left: 13px; }
.clock { margin-left: 13px; width: 37px; }
.power { margin-left: 12px; }
.who { margin-left: 5px; width: 59px; white-space: nowrap; }

.desktop { flex: 1; display: flex; min-height: 0; }

/* launcher */
.launcher { width: 59px; flex: none; overflow: hidden; padding: 6px 0 0; display: flex; flex-direction: column; background: radial-gradient(circle at 55px 95px, #3a568f 0, transparent 2px), radial-gradient(circle at 55px 420px, #5b7cc0 0, transparent 2px), linear-gradient(#0c1430, #10204a 8%, #10214c 70%, #2b2540); border-right: 1px solid #3f444c; }
.app { position: relative; width: 46px; height: 46px; flex: none; margin: 0 0 7px 6px; border-radius: 5px; background: linear-gradient(#414e74, #222f57 50%, #2f3c64); }
.app svg { width: 46px; height: 46px; }
.app-dash { background: linear-gradient(#3d5aa2, #27417f 50%, #3e5aa0); }
.app-files { background: linear-gradient(#8c4552, #732a3a); }
.app-fox { background: linear-gradient(#c08a62, #a3683e); }
.app i { position: absolute; left: -6px; }
.bars { top: 17px; width: 4px; height: 11px; background: repeating-linear-gradient(#d8d8d8 0 2px, transparent 2px 4px); }
.arrow { top: 19px; border: 4px solid transparent; border-left-color: #d8d8d8; border-right: 0; }
.amz { font: bold 34px "Liberation Sans", sans-serif; fill: #222; stroke: #222; stroke-width: .5px; }
.azr { font: bold 29px "Liberation Sans", sans-serif; fill: #0a0a0a; stroke: #0a0a0a; stroke-width: 1.500px; }
.stack { margin-top: -5px; }

/* browser chrome */
.browser { flex: 1; min-width: 0; display: flex; flex-direction: column; }
.tabs { height: 25px; flex: none; display: flex; padding-left: 8px; background: linear-gradient(#3a3935, #3e3d39); font-family: "Noto Sans", "Open Sans", sans-serif; box-shadow: inset 0 -1px #7b7974; }
.tab { position: relative; width: 86.500px; flex: none; display: flex; align-items: center; padding: 0 0 0 13px; color: #35332e; }
.tab .shape { position: absolute; left: 0; top: 0; width: 100px; height: 24px; }
.tab .fav { position: relative; width: 16px; height: 16px; }
.tab span { position: relative; width: 31px; margin-left: 4px; overflow: hidden; white-space: nowrap; font-size: 14px; line-height: 22px; letter-spacing: -.15px; -webkit-mask-image: linear-gradient(90deg, #000 65%, transparent); mask-image: linear-gradient(90deg, #000 65%, transparent); }
.tab .close { position: relative; width: 9px; height: 9px; margin-left: 8px; }
.tab-audio span { width: 18px; -webkit-mask-image: none; mask-image: none; }
.tab .speaker { position: relative; width: 10px; height: 10px; margin: 0 -2px 0 5px; }
.tab-on .shape { height: 25px; z-index: 1; }
.tab-on .fav, .tab-on span, .tab-on .close { z-index: 2; }
.fv-b { font: bold 13px "Liberation Sans", sans-serif; fill: #fff; }
.fv-w3 { font: bold 7.500px "DejaVu Serif", serif; fill: #fff; }
.fv-bs { font: bold 11.500px "DejaVu Sans", sans-serif; fill: #000; }
.fv-g { font: bold 8px "Liberation Sans", sans-serif; fill: #fff; }
.newtab { margin: 5px 0 0 6px; }
.profile { width: 24px; height: 18px; margin: 2px 0 0 7px; border: 1px solid #69675f; border-top-color: #22211e; border-radius: 0 0 4px 4px; background: #363531; display: flex; align-items: center; justify-content: center; }
.toolbar { height: 36px; flex: none; display: flex; align-items: center; padding: 0 8px 0 10px; background: #f2f1f0; border-bottom: 1px solid #b4b3ae; }
.fwd { margin-left: 20px; }
.reload { margin-left: 12px; }
.omnibox { width: 1220px; height: 27px; margin-left: 11px; padding: 0 4px 0 7px; display: flex; align-items: center; background: #fff; border: 1px solid #bab8b4; border-top-color: #93918d; border-radius: 3px; }
.url { flex: 1; margin-left: 6px; font: 15px/22px "Noto Sans", "Open Sans", sans-serif; padding-bottom: 2px; letter-spacing: -.07px; color: #8f8f8f; white-space: nowrap; }
.url b { font-weight: 400; color: #2c2c2c; }
.star { margin-right: 0; }
.bug { margin-left: 9px; }
.menu { margin-left: 16px; }

/* viewport and scrollbars */
.view { flex: 1; min-height: 0; display: grid; grid-template-columns: 1366px 15px; grid-template-rows: 800px 15px; }
.page { overflow: hidden; background: linear-gradient(#6a939f, #2a6f4b 66%, #0c611d); }
.vbar, .hbar, .corner { background: #f0f0f0; }
.vbar { display: flex; flex-direction: column; align-items: center; padding: 6px 0 5px; }
.vthumb { width: 11px; height: 433px; margin: 4px 0 auto; background: #bbb; border: 1px solid #a6a6a6; }
.hbar { display: flex; align-items: center; padding: 0 5px; }
.hthumb { width: 1289px; height: 11px; margin: 0 auto 0 5px; background: #bbb; border: 1px solid #a6a6a6; }
.up, .down, .left, .right { border: 4px solid transparent; }
.up { border-top: 0; border-bottom-color: #a0a0a0; }
.down { border-bottom: 0; border-top-color: #505050; }
.left { border-left: 0; border-right-color: #a0a0a0; }
.right { border-right: 0; border-left-color: #505050; }

/* navbar */
.navbar { height: 51px; padding: 0 113px; display: flex; background: #222; border-bottom: 1px solid #080808; }
.brand { display: flex; width: 808px; color: #fff; font: 16px/48px "DejaVu Sans", Verdana, sans-serif; white-space: nowrap; }
.brand span { margin-left: 4px; letter-spacing: .65px; }
.logo-text { font: bold 5px "DejaVu Sans", sans-serif; fill: #4f9b20; }
.nav { display: flex; margin: 0; padding: 0; list-style: none; color: #9d9d9d; font-size: 14px; line-height: 20px; fill: #9d9d9d; }
.nav li { display: flex; align-items: center; height: 50px; }
.nav a { margin-left: 3px; }
.nav .n-home a { margin-left: 2px; }
.nav .n-set { margin-left: 33px; }
.nav .n-data { margin-left: 32px; }
.nav .n-data a { margin-left: 1px; }
.nav .n-admin { margin-left: 30px; }
.nav .n-admin a { margin-left: 4px; }
.caret { margin: 2px 0 0 6px; border: 4px solid transparent; border-top-color: #9d9d9d; border-bottom: 0; }

/* content */
.sheet { width: 1000px; height: 900px; margin-left: 183px; padding: 49px 25px 0; background: #fff; color: #333; font-size: 14px; line-height: 20px; }
h1 { margin: 0; height: 49px; border-bottom: 1px solid #eee; font-size: 36px; font-weight: 400; line-height: 40px; }
h1 small { font-size: 23.400px; color: #777; }
.crumb { margin-top: 20px; height: 36px; padding: 0 15px; display: flex; align-items: center; gap: 4px; background: #f5f5f5; border-radius: 4px; color: #777; fill: #777; }
.form { margin: 20px 0 0; display: grid; grid-template-columns: 133px 215px 134px 215px; grid-template-rows: repeat(4, 34px) 27px 54px 34px; gap: 15px 30px; }
.form label { padding-top: 7px; text-align: right; font-weight: 700; white-space: nowrap; }
.form .r { padding-right: .7px; }
.field, .select, .area { width: 100%; min-width: 0; height: 34px; margin: 0; padding: 6px 12px; background: #fff; border: 1px solid #ccc; border-radius: 4px; box-shadow: inset 0 1px 1px rgba(0, 0, 0, .075); }
.select { display: flex; align-items: center; justify-content: space-between; padding: 0 6px 0 16px; color: #555; }
.select i { border: 3.500px solid transparent; border-top: 6px solid #000; border-bottom: 0; }
.group { display: flex; }
.group .field { flex: 1; border-radius: 4px 0 0 4px; }
.addon { width: 39px; border: 1px solid #ccc; border-left: 0; border-radius: 0 4px 4px 0; background: #eee; display: flex; align-items: center; justify-content: center; }
.radios { display: flex; align-items: flex-start; padding-top: 2px; }
.radios input { appearance: none; flex: none; width: 12px; height: 12px; margin: 2px 1px 0 0; border: 1px solid #a5a5a5; border-radius: 50%; background: linear-gradient(#e9e9e9, #d8d8d8); }
.radios span { margin-right: 4.500px; }
.file { display: flex; align-items: center; height: 22px; gap: 5px; }
.file-btn { width: 90px; height: 22px; border: 1px solid #999; border-radius: 2px; background: linear-gradient(#f8f8f8, #ddd); color: #000; text-align: center; line-height: 20px; }
.area { height: 54px; padding: 0; display: flex; justify-content: flex-end; align-items: flex-end; }
.actions { grid-row: 7; grid-column: 3 / 5; display: flex; gap: 4px; }
.actions button { height: 34px; padding: 0 12px; border: 1px solid #ccc; border-radius: 4px; background: #fff; color: #333; font: 14px "Liberation Sans", Arial, sans-serif; }
.list { margin: 35px 15px 0; padding-top: 20px; border-top: 1px solid #eee; }
.list-bar { display: flex; justify-content: space-between; height: 30px; line-height: 28px; }
.len, .find { display: flex; gap: 4px; }
.select-sm { width: 66px; height: 30px; padding-left: 14px; font-size: 11.500px; border-radius: 3px; }
.find { gap: 6px; }
.field-sm { width: 149px; height: 30px; border-radius: 3px; }
table { width: 920px; margin-top: 11px; table-layout: fixed; border-collapse: separate; border-spacing: 0; border: solid #ddd; border-width: 1px 0 0 1px; }
th, td { position: relative; padding: 8px; border: solid #ddd; border-width: 0 1px 1px 0; text-align: left; vertical-align: top; }
th { height: 59px; padding-right: 30px; border-bottom-width: 3px; vertical-align: bottom; }
th.mid { text-align: center; }
th svg { position: absolute; right: 7.500px; top: 10px; width: 14px; height: 15px; fill: #d6d6d6; }
th .asc { right: 7px; fill: #999; }
td { height: 57px; white-space: nowrap; }
td:last-child { white-space: normal; }
td a { color: #337ab7; }
td svg { display: inline-block; vertical-align: -2px; fill: #337ab7; }
.i-edit { width: 14px; height: 14px; margin: 0 2px; }
.i-trash { width: 11px; height: 12px; margin: 0 2px 0 3px; vertical-align: -1px; stroke: #337ab7; stroke-width: 40px; }
.c1 { width: 62px; } .c2 { width: 173px; } .c3 { width: 108px; } .c4 { width: 86px; }
.c5 { width: 119px; } .c6 { width: 88px; } .c7 { width: 194px; } .c8 { width: 89px; }
```
